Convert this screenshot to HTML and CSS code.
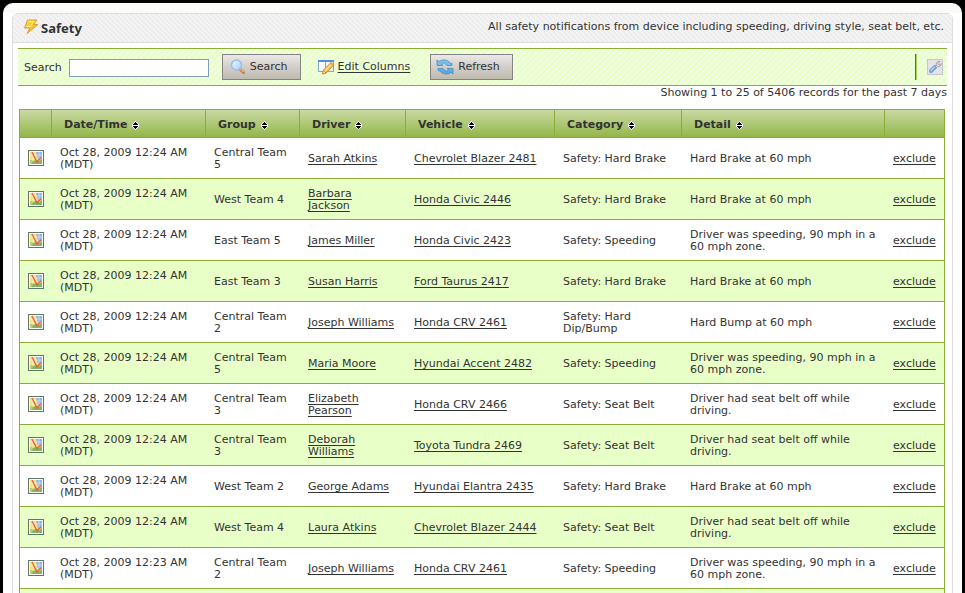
FILE: index.html
```
<!DOCTYPE html>
<html lang="en">
<head>
<meta charset="utf-8">
<title>Safety</title>
<link rel="stylesheet" href="styles.css">
</head>
<body>
<svg class="sprite" aria-hidden="true">
  <defs>
    <linearGradient id="g-bolt" x1="0" y1="0" x2="0" y2="1"><stop offset="0" stop-color="#fbd83a"/><stop offset="1" stop-color="#f5b52c"/></linearGradient>
    <linearGradient id="g-lens" x1="0" y1="0" x2="1" y2="1"><stop offset="0" stop-color="#eaf5ff"/><stop offset="1" stop-color="#a5d0fa"/></linearGradient>
    <linearGradient id="g-blue" x1="0" y1="0" x2="0" y2="1"><stop offset="0" stop-color="#85c5ec"/><stop offset="1" stop-color="#58a3dc"/></linearGradient>
    <symbol id="map" viewBox="0 0 16 16">
      <rect x=".5" y=".5" width="15" height="15" fill="#fff" stroke="#5f7769"/>
      <rect x="2" y="2" width="12" height="12" fill="#f6e28b"/>
      <path d="M8 2h6v7h-4z" fill="#8fb4ec"/>
      <path d="M2 10l3 1 3-1 3 1 3-2v5H2z" fill="#7fb95e"/>
      <path d="M2 5h12M5 2v8M11 2v7" stroke="#fff" stroke-opacity=".45"/>
      <path d="M2 10l3 1-1 3H2z" fill="#b9d072"/>
      <path d="M4 2l5.500 11M9 11.500l4-3.500" fill="none" stroke="#e8603f" stroke-width="1.400"/>
    </symbol>
    <symbol id="sort" viewBox="0 0 7 9">
      <path d="M3 0h1v1h1v1h1v1h1v3H6v1H5v1H4v1H3V8H2V7H1V6H0V3h1V2h1V1h1z" fill="#fff"/>
      <path d="M3 1h1v1h1v1h1v1H1V3h1V2h1zM1 5h5v1H5v1H4v1H3V7H2V6H1z" fill="#000"/>
    </symbol>
  </defs>
</svg>
<div class="shell">
  <main class="panel">
    <header class="panel-head">
      <svg class="bolt" viewBox="0 0 16 16" aria-hidden="true"><path d="M4.500 1H14L10.500 5.500H15L4 14.500L7 9H1.500z" fill="url(#g-bolt)" stroke="#e29b32" stroke-linejoin="round"/><path d="M5.500 2.500H11L8 6.500M3.500 7.500H8" fill="none" stroke="#fff2a0"/></svg>
      <h1>Safety</h1>
      <p>All safety notifications from device including speeding, driving style, seat belt, etc.</p>
    </header>
    <form class="toolbar">
      <label for="q">Search</label>
      <input id="q" type="text">
      <button type="button" class="btn">
        <svg class="icon" viewBox="0 0 16 16" aria-hidden="true"><path d="M10 10l3.500 3.500" stroke="#b87d4b" stroke-width="3" stroke-linecap="round"/><path d="M10.500 10l3 3" stroke="#f2b66c" stroke-width="1.500"/><circle cx="6.500" cy="6" r="5" fill="url(#g-lens)" stroke="#9bbde9" stroke-width="1.500"/></svg>
        Search
      </button>
      <a class="edit" href="#">
        <svg class="icon" viewBox="0 0 16 16" aria-hidden="true"><path d="M.5 1.500h15v11H.5z" fill="#f8fbff" stroke="#78a7d8"/><path d="M0 1h16v2H0z" fill="#5691d0"/><path d="M7.500 3v10" stroke="#78a7d8"/><path d="M4.500 15l1-4L13 3.500l2.500 2.500L8 14z" fill="#f9cc55" stroke="#c7852d"/><path d="M12 4.500l2.500 2.500 1.300-1.300-2.500-2.500z" fill="#e89572"/><path d="M4.500 15l1-3.500L8 14z" fill="#f9e2bd" stroke="#b7783c" stroke-width=".6"/><path d="M7 11.500l6-6" stroke="#fff0a5"/></svg><span>Edit Columns</span></a>
      <button type="button" class="btn refresh">
        <svg class="icon" viewBox="0 0 18 16" aria-hidden="true"><path d="M1 1l2 1.500C6 0 12 .5 14 4l2 .5v2h-5L9.500 5C8 3.500 6.500 4 5.500 5L7 6.500H1zM17 15l-2-1.500C12 16 6 15.500 4 12l-2-.5v-2h5L8.500 11c1.500 1.500 3 1 4 0L11 9.500h6z" fill="url(#g-blue)" stroke="#438fc5" stroke-width=".8"/></svg>
        Refresh
      </button>
      <span class="rule"></span>
      <button type="button" class="tool" aria-label="Settings">
        <svg class="icon" viewBox="0 0 16 16" aria-hidden="true"><rect x=".5" y=".5" width="15" height="15" fill="#e4e4e4" stroke="#c6c6d0"/><path d="M4 12l4-4" stroke="#6f9de0" stroke-width="4" stroke-linecap="round"/><path d="M4 11.500L7.500 8" stroke="#b5d3fa" stroke-width="1.500" stroke-linecap="round"/><path d="M8 8l1.500-1.500C8.500 4 10.500 2 13 2.500L11 4.500l.5 1 1 .5L14 4.500C14.500 6.500 12.500 8.500 10.500 7.500L9 9z" fill="#ddd" stroke="#8e8e8e" stroke-width=".8"/></svg>
      </button>
    </form>
    <p class="count">Showing 1 to 25 of 5406 records for the past 7 days</p>
    <table>
      <colgroup><col class="c-map"><col class="c-date"><col class="c-group"><col class="c-driver"><col class="c-vehicle"><col class="c-category"><col><col class="c-action"></colgroup>
      <thead>
        <tr>
          <th></th>
          <th>Date/Time <svg class="sort"><use href="#sort"/></svg></th>
          <th>Group <svg class="sort"><use href="#sort"/></svg></th>
          <th>Driver <svg class="sort"><use href="#sort"/></svg></th>
          <th>Vehicle <svg class="sort"><use href="#sort"/></svg></th>
          <th>Category <svg class="sort"><use href="#sort"/></svg></th>
          <th>Detail <svg class="sort"><use href="#sort"/></svg></th>
          <th></th>
        </tr>
      </thead>
      <tbody>
        <tr><td><svg class="icon"><use href="#map"/></svg></td><td>Oct 28, 2009 12:24 AM (MDT)</td><td>Central Team 5</td><td><a href="#">Sarah Atkins</a></td><td><a href="#">Chevrolet Blazer 2481</a></td><td>Safety: Hard Brake</td><td>Hard Brake at 60 mph</td><td><a href="#">exclude</a></td></tr>
        <tr><td><svg class="icon"><use href="#map"/></svg></td><td>Oct 28, 2009 12:24 AM (MDT)</td><td>West Team 4</td><td><a href="#">Barbara Jackson</a></td><td><a href="#">Honda Civic 2446</a></td><td>Safety: Hard Brake</td><td>Hard Brake at 60 mph</td><td><a href="#">exclude</a></td></tr>
        <tr><td><svg class="icon"><use href="#map"/></svg></td><td>Oct 28, 2009 12:24 AM (MDT)</td><td>East Team 5</td><td><a href="#">James Miller</a></td><td><a href="#">Honda Civic 2423</a></td><td>Safety: Speeding</td><td>Driver was speeding, 90 mph in a 60 mph zone.</td><td><a href="#">exclude</a></td></tr>
        <tr><td><svg class="icon"><use href="#map"/></svg></td><td>Oct 28, 2009 12:24 AM (MDT)</td><td>East Team 3</td><td><a href="#">Susan Harris</a></td><td><a href="#">Ford Taurus 2417</a></td><td>Safety: Hard Brake</td><td>Hard Brake at 60 mph</td><td><a href="#">exclude</a></td></tr>
        <tr><td><svg class="icon"><use href="#map"/></svg></td><td>Oct 28, 2009 12:24 AM (MDT)</td><td>Central Team 2</td><td><a href="#">Joseph Williams</a></td><td><a href="#">Honda CRV 2461</a></td><td>Safety: Hard Dip/Bump</td><td>Hard Bump at 60 mph</td><td><a href="#">exclude</a></td></tr>
        <tr><td><svg class="icon"><use href="#map"/></svg></td><td>Oct 28, 2009 12:24 AM (MDT)</td><td>Central Team 5</td><td><a href="#">Maria Moore</a></td><td><a href="#">Hyundai Accent 2482</a></td><td>Safety: Speeding</td><td>Driver was speeding, 90 mph in a 60 mph zone.</td><td><a href="#">exclude</a></td></tr>
        <tr><td><svg class="icon"><use href="#map"/></svg></td><td>Oct 28, 2009 12:24 AM (MDT)</td><td>Central Team 3</td><td><a href="#">Elizabeth Pearson</a></td><td><a href="#">Honda CRV 2466</a></td><td>Safety: Seat Belt</td><td>Driver had seat belt off while driving.</td><td><a href="#">exclude</a></td></tr>
        <tr><td><svg class="icon"><use href="#map"/></svg></td><td>Oct 28, 2009 12:24 AM (MDT)</td><td>Central Team 3</td><td><a href="#">Deborah Williams</a></td><td><a href="#">Toyota Tundra 2469</a></td><td>Safety: Seat Belt</td><td>Driver had seat belt off while driving.</td><td><a href="#">exclude</a></td></tr>
        <tr><td><svg class="icon"><use href="#map"/></svg></td><td>Oct 28, 2009 12:24 AM (MDT)</td><td>West Team 2</td><td><a href="#">George Adams</a></td><td><a href="#">Hyundai Elantra 2435</a></td><td>Safety: Hard Brake</td><td>Hard Brake at 60 mph</td><td><a href="#">exclude</a></td></tr>
        <tr><td><svg class="icon"><use href="#map"/></svg></td><td>Oct 28, 2009 12:24 AM (MDT)</td><td>West Team 4</td><td><a href="#">Laura Atkins</a></td><td><a href="#">Chevrolet Blazer 2444</a></td><td>Safety: Seat Belt</td><td>Driver had seat belt off while driving.</td><td><a href="#">exclude</a></td></tr>
        <tr><td><svg class="icon"><use href="#map"/></svg></td><td>Oct 28, 2009 12:23 AM (MDT)</td><td>Central Team 2</td><td><a href="#">Joseph Williams</a></td><td><a href="#">Honda CRV 2461</a></td><td>Safety: Speeding</td><td>Driver was speeding, 90 mph in a 60 mph zone.</td><td><a href="#">exclude</a></td></tr>
        <tr><td></td><td></td><td></td><td></td><td></td><td></td><td></td><td></td></tr>
      </tbody>
    </table>
  </main>
</div>
</body>
</html>
```
FILE: styles.css
```
* { box-sizing: border-box; }

body {
  margin: 0;
  height: 100vh;
  overflow: hidden;
  background: #000;
  color: #333;
  font: 11px/12px Verdana, "DejaVu Sans", sans-serif;
}

h1, p { margin: 0; }
a { color: inherit; text-decoration: underline; text-underline-offset: 2px; }
svg { flex: none; }
.sprite { position: absolute; width: 0; height: 0; }
.icon { display: block; width: 16px; height: 16px; }

.shell {
  margin: 3px 3px 0;
  padding: 10px 9px 0;
  border-radius: 10px 10px 0 0;
  background: linear-gradient(#fafaf8 10px, #fff 10px);
}

.panel {
  border: 1px solid #ddd;
  border-radius: 6px 6px 0 0;
  padding-bottom: 10px;
}

.panel-head {
  display: flex;
  align-items: center;
  height: 29px;
  padding: 0 8px 0 10px;
  border-bottom: 1px solid #ddd;
  border-radius: 5px 5px 0 0;
  background: linear-gradient(45deg, #eee 42%, #fafafa 42% 58%, #eee 58%) 0 0 / 5px 5px;
}
.bolt { width: 16px; height: 16px; margin-bottom: 2px; }
h1 { margin-left: 2px; font: bold 13px/18px "Noto Sans", sans-serif; }
.panel-head p { margin-left: auto; padding-bottom: 2px; }

.toolbar {
  display: flex;
  align-items: center;
  height: 38px;
  margin: 5px 5px 0;
  padding: 0 4px 0 6px;
  border: solid #8cac35;
  border-width: 1px 0;
  background: linear-gradient(135deg, #e8ffc8 42%, #f9fff0 42% 58%, #e8ffc8 58%) 0 0 / 6px 6px;
}
.toolbar label { padding-top: 2px; }
.toolbar input {
  width: 140px;
  height: 18px;
  margin: 2px 13px 0 7px;
  padding: 0 3px;
  border: 1px solid #7f9db9;
  background: #fff;
  font: inherit;
}
.btn {
  display: flex;
  align-items: center;
  gap: 4px;
  height: 26px;
  padding: 0 12px 0 7px;
  border: 1px solid #848484;
  background: linear-gradient(#ece8e8, #d4d0cb 45%, #c0bbb0);
  color: #333;
  font: inherit;
}
.refresh { padding-left: 5px; }
.refresh .icon { width: 18px; }
.edit { display: flex; align-items: center; gap: 4px; margin: 0 20px 0 17px; }
.rule { width: 2px; height: 26px; margin: 0 10px 0 auto; border-left: 1px solid #568014; background: #a5cf5c; }
.tool { padding: 0; border: 0; background: none; }

.count { margin: 1px 5px 10px; text-align: right; }

table {
  width: calc(100% - 13px);
  margin: 0 7px 0 6px;
  table-layout: fixed;
  border-collapse: separate;
  border-spacing: 0;
  border: solid #8cac35;
  border-width: 1px 1px 0;
}
.c-map { width: 32px; }
.c-date { width: 154px; }
.c-group { width: 94px; }
.c-driver { width: 106px; }
.c-vehicle { width: 149px; }
.c-category { width: 127px; }
.c-action { width: 59px; }

th {
  height: 28px;
  padding: 2px 0 0 12px;
  border: solid #8cac35;
  border-width: 0 1px 1px 0;
  background: linear-gradient(#c9daa3, #93b649);
  text-align: left;
}
th:last-child { border-right: 0; }
.sort { width: 7px; height: 9px; margin-left: 1px; vertical-align: -2px; }

td {
  height: 41px;
  padding: 2px 8px 0;
  border-bottom: 1px solid #8cac35;
}
td:first-child { padding-top: 0; }
td:nth-child(4) { padding-right: 10px; }
tbody tr:nth-child(even) { background: #e8ffc8; }
```
